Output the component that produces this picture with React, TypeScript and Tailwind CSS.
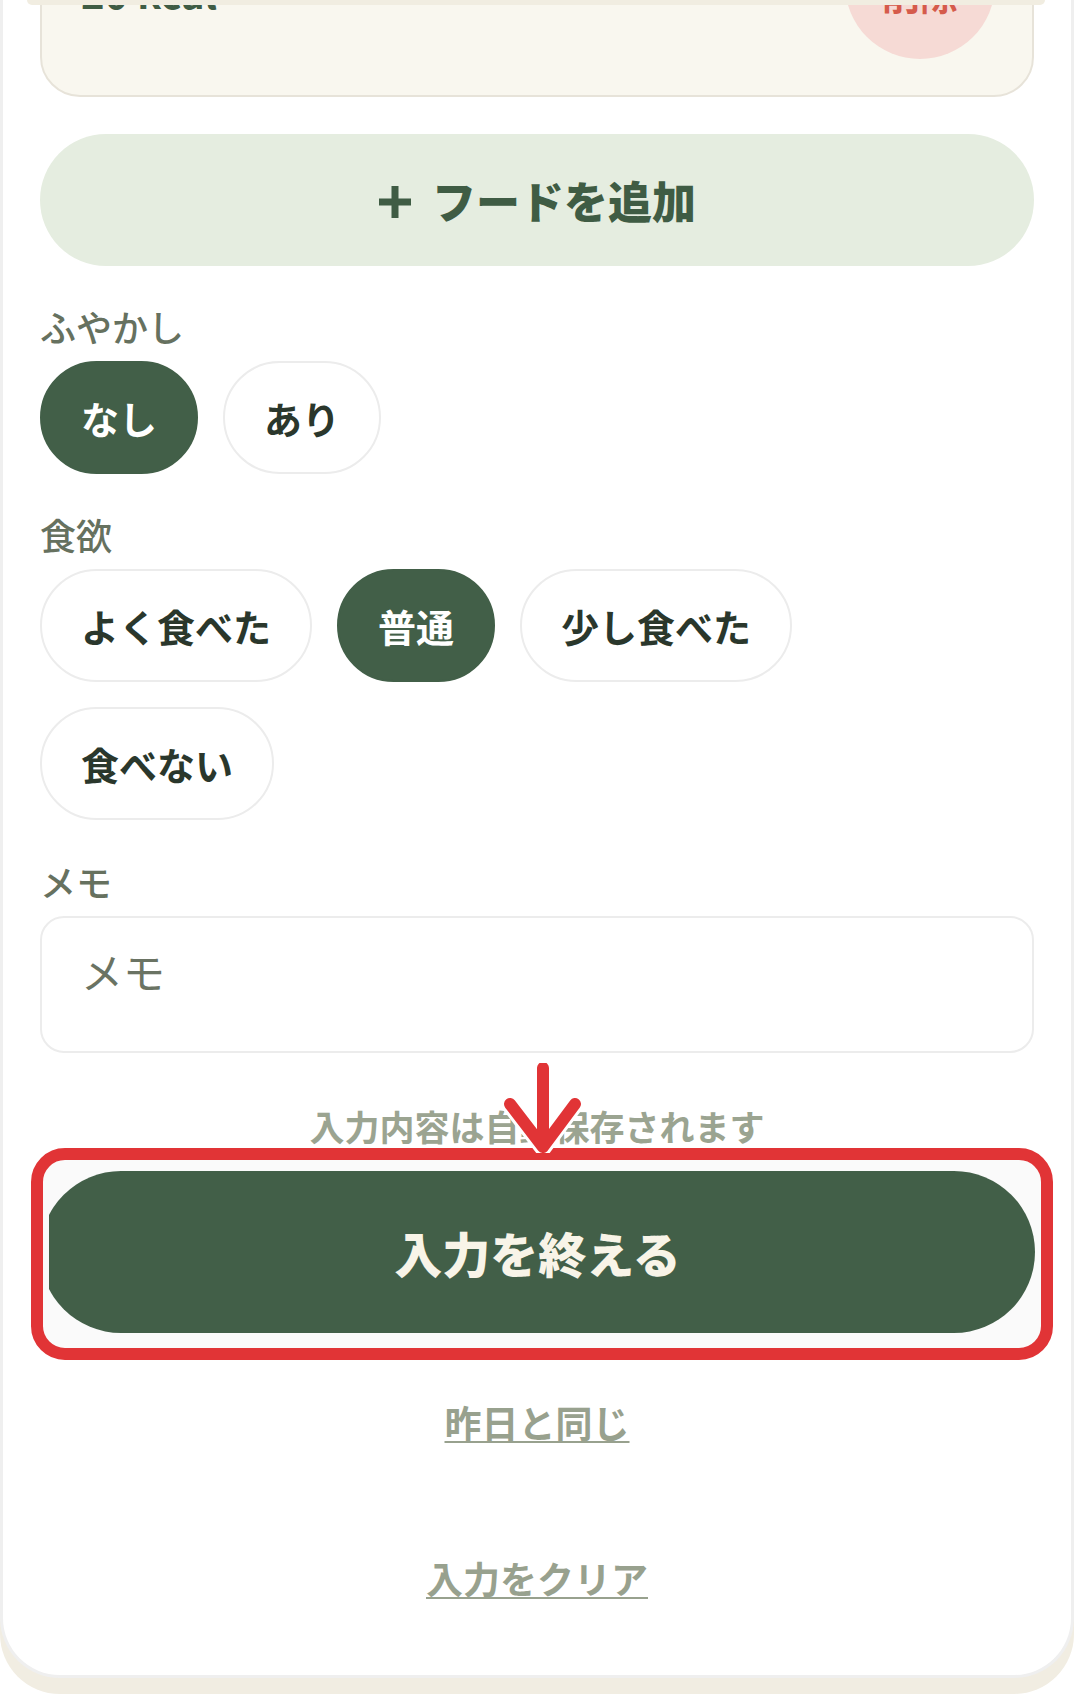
import { useState } from "react";

const feedingOptions = ["なし", "あり"];
const appetiteOptions = ["よく食べた", "普通", "少し食べた", "食べない"];

function Chip({ label, active, onClick }: { label: string; active: boolean; onClick: () => void }) {
  return (
    <button
      type="button"
      onClick={onClick}
      className={
        active
          ? "flex h-[113px] items-center rounded-full border-2 border-[#425f48] bg-[#425f48] px-[39px] text-[38px] font-bold text-white"
          : "flex h-[113px] items-center rounded-full border-2 border-[#ececec] bg-white px-[39px] text-[38px] font-bold text-[#2a372c]"
      }
    >
      {label}
    </button>
  );
}

function FieldLabel({ children }: { children: string }) {
  return <p className="text-[36px] leading-[40px] font-medium text-[#66715f]">{children}</p>;
}

// red pointer drawn above the save note
function PointerArrow() {
  return (
    <svg
      className="absolute left-[calc(50%-34px)] top-[-43px] z-10"
      width="80"
      height="90"
      viewBox="0 0 80 90"
      fill="none"
      strokeLinecap="round"
      strokeLinejoin="round"
    >
      <polygon points="7,41 72,41 40,84" fill="white" />
      <path d="M40 5V84M7 41L40 84L72 41" stroke="white" strokeWidth="18" />
      <path d="M40 5V84M7 41L40 84L72 41" stroke="#e13436" strokeWidth="12" />
    </svg>
  );
}

export default function App() {
  const [feeding, setFeeding] = useState("なし");
  const [appetite, setAppetite] = useState("普通");

  return (
    <div className="relative min-h-[1700px] bg-white font-['Noto_Sans_CJK_JP','Noto_Sans',sans-serif]">
      {/* sticky header edge */}
      <div className="absolute left-[27px] right-[29px] top-0 z-20 h-[5px] rounded-b-[6px] bg-[#f1ede1]" />

      <main className="flex flex-col rounded-b-[60px] border-x-[3px] border-b-[3px] border-[#efefef] bg-white px-[37px] pb-[77px] shadow-[0_16px_0_#f1ede2]">
        {/* food item card */}
        <div className="-mt-[103px] flex h-[200px] items-start justify-between rounded-[40px] border-2 border-[#e7e3d9] bg-[#f9f7ef] pl-[39px] pr-[37px] pt-[10px]">
          <p className="mt-[63px] text-[40px] leading-none font-bold text-[#3f5c44]">20 kcal</p>
          <button
            type="button"
            className="flex size-[150px] items-center justify-center rounded-full bg-[#f6dad5] pt-[18px] text-[38px] font-bold text-[#d55b4b]"
          >
            削除
          </button>
        </div>

        <button
          type="button"
          className="mt-[37px] flex h-[132px] items-center justify-center gap-[20px] rounded-full bg-[#e5ede0] text-[44px] font-black text-[#3f5c44]"
        >
          <svg width="34" height="34" viewBox="0 0 34 34" className="mt-[4px]">
            <path d="M17 1V33M1 17H33" stroke="currentColor" strokeWidth="7" />
          </svg>
          <span>フードを追加</span>
        </button>

        <div className="mt-[40px]">
          <FieldLabel>ふやかし</FieldLabel>
          <div className="mt-[15px] flex flex-wrap gap-[25px]">
            {feedingOptions.map((o) => (
              <Chip key={o} label={o} active={feeding === o} onClick={() => setFeeding(o)} />
            ))}
          </div>
        </div>

        <div className="mt-[40px]">
          <FieldLabel>食欲</FieldLabel>
          <div className="mt-[15px] flex flex-wrap gap-[25px]">
            {appetiteOptions.map((o) => (
              <Chip key={o} label={o} active={appetite === o} onClick={() => setAppetite(o)} />
            ))}
          </div>
        </div>

        <div className="mt-[41px]">
          <FieldLabel>メモ</FieldLabel>
          <textarea
            placeholder="メモ"
            className="mt-[15px] block h-[137px] w-full resize-none rounded-[24px] border-2 border-[#ececec] px-[39px] pt-[24px] text-[42px] leading-[1.4] text-[#2a372c] outline-none placeholder:text-[#6a7363]"
          />
        </div>

        <div className="relative mt-[53px]">
          <p className="text-center text-[35px] leading-[40px] font-bold text-[#9ba491]">入力内容は自動保存されます</p>
          <PointerArrow />
        </div>

        <div className="-ml-[9px] -mr-[19px] mt-[2px] rounded-[34px] border-[12px] border-[#e13436] bg-[#fafafa] pb-[15px] pl-[6px] pr-[6px] pt-[11px]">
          <div className="overflow-hidden">
            <button
              type="button"
              className="-ml-[9px] flex h-[162px] w-[calc(100%+9px)] items-center justify-center rounded-full bg-[#425f48] text-[48px] font-black text-[#f8f4e8]"
            >
              入力を終える
            </button>
          </div>
        </div>

        <button
          type="button"
          className="mx-auto mt-[42px] text-[37px] leading-[40px] font-bold text-[#98a18e] underline decoration-2 underline-offset-[3px]"
        >
          昨日と同じ
        </button>

        <button
          type="button"
          className="mx-auto mt-[116px] text-[37px] leading-[40px] font-bold text-[#98a18e] underline decoration-2 underline-offset-[3px]"
        >
          入力をクリア
        </button>
      </main>
    </div>
  );
}
